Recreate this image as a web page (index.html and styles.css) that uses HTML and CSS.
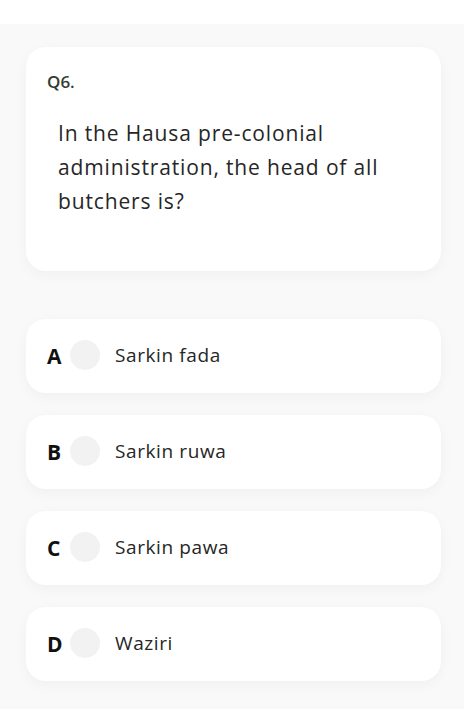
FILE: index.html
```html
<!DOCTYPE html>
<html lang="en">
<head>
    <meta charset="UTF-8">
    <meta name="viewport" content="width=device-width, initial-scale=1.0">
    <title>Quiz</title>
    <link rel="stylesheet" href="styles.css">
</head>
<body>

    <div class="top-bar"></div>

    <div class="quiz">
        <div class="question-card">
            <div class="question-number">Q6.</div>
            <p class="question-text">In the Hausa pre-colonial administration, the head of all butchers is?</p>
        </div>

        <div class="options">
            <div class="option">
                <span class="option-letter">A</span>
                <span class="option-radio"></span>
                <span class="option-text">Sarkin fada</span>
            </div>
            <div class="option">
                <span class="option-letter">B</span>
                <span class="option-radio"></span>
                <span class="option-text">Sarkin ruwa</span>
            </div>
            <div class="option">
                <span class="option-letter">C</span>
                <span class="option-radio"></span>
                <span class="option-text">Sarkin pawa</span>
            </div>
            <div class="option">
                <span class="option-letter">D</span>
                <span class="option-radio"></span>
                <span class="option-text">Waziri</span>
            </div>
        </div>
    </div>

</body>
</html>
```

FILE: styles.css
```css
body {
    font-family: 'Open Sans', 'Lato', sans-serif;
    background-color: #f9f9f9;
    color: #222;
    margin: 0;
    height: 100vh;
}

.top-bar {
    height: 24px;
    background-color: #ffffff;
}

.quiz {
    padding: 23px 23px 0 26px;
}

.question-card {
    background-color: #ffffff;
    border-radius: 20px;
    box-shadow: 0 4px 14px rgba(0, 0, 0, 0.04);
    height: 224px;
    box-sizing: border-box;
    padding: 24px 22px 0 21px;
}

.question-number {
    font-size: 17px;
    font-weight: 600;
    color: #353b31;
    line-height: 22px;
}

.question-text {
    margin: 23px 0 0 11px;
    font-size: 21px;
    letter-spacing: 0.85px;
    line-height: 34px;
    color: #262626;
    padding-right: 20px;
}

.options {
    margin-top: 48px;
    display: flex;
    flex-direction: column;
    gap: 22px;
}

.option {
    background-color: #ffffff;
    border-radius: 20px;
    box-shadow: 0 4px 14px rgba(0, 0, 0, 0.04);
    height: 74px;
    display: flex;
    align-items: center;
    padding: 0 21px;
}

.option-letter {
    font-size: 21px;
    font-weight: 700;
    color: #111;
    min-width: 16px;
    margin-right: 7px;
}

.option-radio {
    width: 30px;
    height: 30px;
    border-radius: 50%;
    background-color: #f2f2f2;
    margin-right: 15px;
    flex-shrink: 0;
    margin-top: -2px;
}

.option-text {
    font-size: 19px;
    letter-spacing: 0.6px;
    color: #262626;
    margin-top: -2px;
}
```
